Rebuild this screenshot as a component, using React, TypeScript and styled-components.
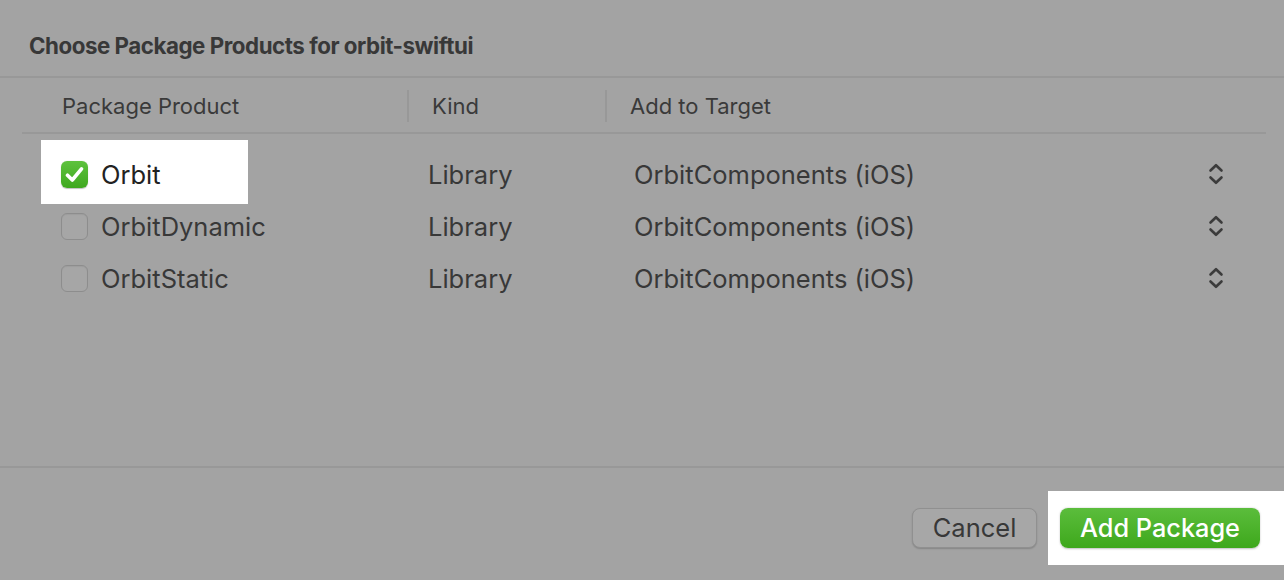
import React from "react";
import styled, { createGlobalStyle } from "styled-components";

const Global = createGlobalStyle`
  html, body { margin: 0; padding: 0; background: #a3a3a3; }
  body { font-family: Inter, "Noto Sans", "Liberation Sans", sans-serif; -webkit-font-smoothing: antialiased; }
`;

const Sheet = styled.div`
  width: 1284px;
  height: 580px;
  background: #a3a3a3;
  color: #383838;
  display: flex;
  flex-direction: column;
  overflow: hidden;
`;

const TitleBar = styled.div`
  height: 78px;
  display: flex;
  align-items: center;
  padding-left: 29px;
  box-sizing: border-box;
  border-bottom: 2px solid #989898;
  padding-top: 14px;
`;

const Title = styled.h1`
  margin: 0;
  font-size: 22.3px;
  font-weight: 700;
  letter-spacing: -0.45px;
  color: #383838;
`;

const Table = styled.div`
  margin: 0 18px 0 22px;
  flex: 1;
  display: flex;
  flex-direction: column;
`;

const Grid = styled.div`
  display: grid;
  grid-template-columns: 385px 198px 1fr;
  align-items: center;
`;

const HeaderRow = styled(Grid)`
  height: 56px;
  box-sizing: border-box;
  border-bottom: 2px solid #989898;
`;

const HeaderCell = styled.div<{ $sep?: boolean; $pad: number }>`
  height: 32px;
  display: flex;
  align-items: center;
  padding-left: ${(p) => p.$pad}px;
  border-left: ${(p) => (p.$sep ? "2px solid #989898" : "none")};
  font-size: 22px;
  color: #3a3a3a;
  margin-top: 2px;
`;

const Body = styled.div`
  padding-top: 14px;
  display: flex;
  flex-direction: column;
`;

const Row = styled(Grid)`
  height: 52px;
`;

const Cell = styled.div<{ $pad: number }>`
  padding-left: ${(p) => p.$pad}px;
  display: flex;
  align-items: center;
  font-size: 25.5px;
  color: #383838;
`;

const ProductBox = styled.div<{ $hl?: boolean }>`
  display: flex;
  align-items: center;
  gap: 13px;
  width: 207px;
  box-sizing: border-box;
  margin: -19px 0 -14px -20px;
  padding: 19px 0 14px 20px;
  background: ${(p) => (p.$hl ? "#ffffff" : "transparent")};
  color: ${(p) => (p.$hl ? "#222" : "#383838")};
`;

const Check = styled.span<{ $on?: boolean }>`
  width: 27px;
  height: 27px;
  border-radius: 6px;
  box-sizing: border-box;
  display: inline-flex;
  align-items: center;
  justify-content: center;
  flex-shrink: 0;
  background: ${(p) =>
    p.$on ? "linear-gradient(#5ec23e, #3fa81f)" : "#a6a6a6"};
  border: ${(p) => (p.$on ? "none" : "1px solid #8d8d8d")};
  box-shadow: ${(p) => (p.$on ? "0 0.5px 1px rgba(0,0,0,0.25)" : "inset 0 1px 1px rgba(0,0,0,0.05)")};
`;

const TargetCell = styled(Cell)`
  justify-content: space-between;
  padding-right: 42px;
`;

const Footer = styled.div`
  height: 114px;
  border-top: 2px solid #989898;
  display: flex;
  justify-content: flex-end;
  align-items: center;
  padding-right: 24px;
  gap: 11px;
  box-sizing: border-box;
  padding-top: 7px;
`;

const CancelButton = styled.button`
  width: 125px;
  height: 40px;
  border-radius: 8px;
  border: 1px solid #909090;
  background: #a7a7a7;
  box-shadow: 0 1px 1.5px rgba(0, 0, 0, 0.18);
  font-family: inherit;
  font-size: 25.5px;
  color: #383838;
  padding: 0;
`;

const Highlight = styled.div`
  background: #ffffff;
  padding: 17px 24px 17px 12px;
  margin-right: -24px;
  display: flex;
`;

const PrimaryButton = styled.button`
  width: 200px;
  height: 40px;
  border-radius: 8px;
  border: none;
  background: linear-gradient(#5bbd3c, #3ea81c);
  box-shadow: 0 0.5px 2px rgba(0, 0, 0, 0.25);
  color: #ffffff;
  font-family: inherit;
  font-size: 25.3px;
  font-weight: 500;
  padding: 0;
`;

const CheckMark = () => (
  <svg width="19" height="17" viewBox="0 0 19 17">
    <path d="M2.5 9.2 L7.3 14 L16.5 2.8" fill="none" stroke="#fff" strokeWidth="3.6" strokeLinecap="round" strokeLinejoin="round" />
  </svg>
);

const Chevrons = () => (
  <svg width="16" height="24" viewBox="0 0 16 24">
    <path d="M2.5 8.5 L8 3.2 L13.5 8.5" fill="none" stroke="#3c3c3c" strokeWidth="2.6" strokeLinecap="round" strokeLinejoin="round" />
    <path d="M2.5 15.5 L8 20.8 L13.5 15.5" fill="none" stroke="#3c3c3c" strokeWidth="2.6" strokeLinecap="round" strokeLinejoin="round" />
  </svg>
);

const products = [
  { name: "Orbit", checked: true },
  { name: "OrbitDynamic", checked: false },
  { name: "OrbitStatic", checked: false },
];

export default function App() {
  return (
    <>
      <Global />
      <Sheet>
        <TitleBar>
          <Title>Choose Package Products for orbit-swiftui</Title>
        </TitleBar>
        <Table>
          <HeaderRow>
            <HeaderCell $pad={40}>Package Product</HeaderCell>
            <HeaderCell $sep $pad={23}>Kind</HeaderCell>
            <HeaderCell $sep $pad={23}>Add to Target</HeaderCell>
          </HeaderRow>
          <Body>
            {products.map((p) => (
              <Row key={p.name}>
                <Cell $pad={39}>
                  <ProductBox $hl={p.checked}>
                    <Check $on={p.checked}>{p.checked && <CheckMark />}</Check>
                    {p.name}
                  </ProductBox>
                </Cell>
                <Cell $pad={21}>Library</Cell>
                <TargetCell $pad={29}>
                  OrbitComponents (iOS)
                  <Chevrons />
                </TargetCell>
              </Row>
            ))}
          </Body>
        </Table>
        <Footer>
          <CancelButton>Cancel</CancelButton>
          <Highlight>
            <PrimaryButton>Add Package</PrimaryButton>
          </Highlight>
        </Footer>
      </Sheet>
    </>
  );
}
